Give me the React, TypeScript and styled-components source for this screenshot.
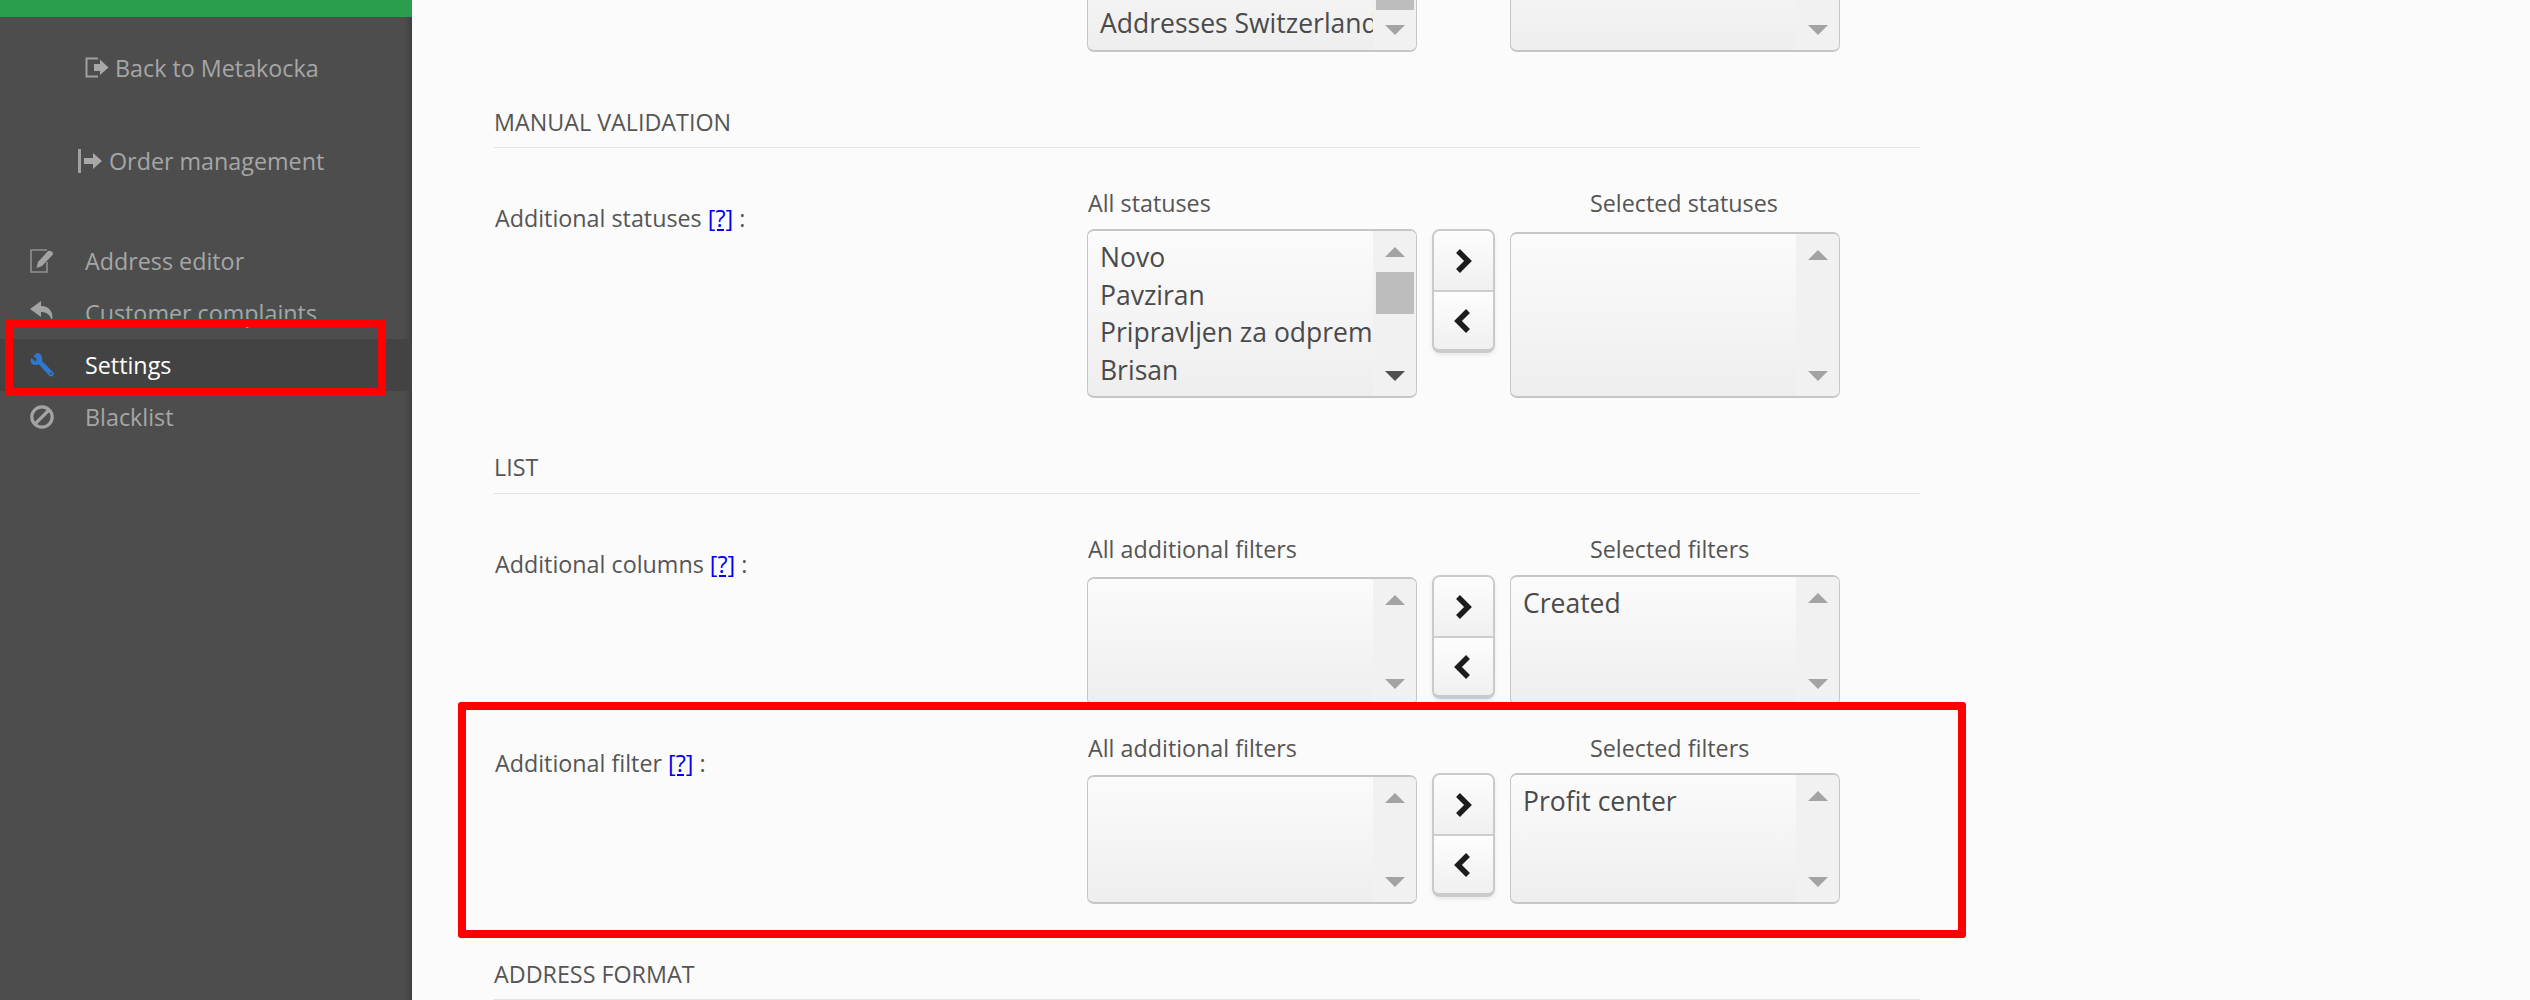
import React from "react";
import styled, { createGlobalStyle } from "styled-components";

const GlobalStyle = createGlobalStyle`
  html, body {
    margin: 0;
    background: #fbfbfb;
  }
  * {
    box-sizing: border-box;
  }
`;

const Page = styled.div`
  position: relative;
  display: flex;
  height: 1000px;
  overflow: hidden;
  font-family: "Open Sans", "Liberation Sans", sans-serif;
  font-size: 23.3px;
  line-height: 30px;
  color: #555;
`;

const Sidebar = styled.aside`
  flex: 0 0 412px;
  background: #4d4d4d;
  box-shadow: inset -7px 0 6px -5px rgba(0, 0, 0, 0.25);
  color: #a6a6a6;
`;

const GreenBar = styled.div`
  height: 17px;
  background: #2a9d4f;
`;

const TopLink = styled.div<{ $left: number; $gap: number }>`
  display: flex;
  align-items: center;
  height: 93px;
  padding-left: ${(p) => p.$left}px;
  gap: ${(p) => p.$gap}px;
`;

const TopLinks = styled.div`
  margin-top: 4px;
`;

const Nav = styled.nav`
  margin-top: 28px;
`;

const NavItem = styled.div<{ $active?: boolean }>`
  display: grid;
  grid-template-columns: 55px 1fr;
  align-items: center;
  height: 52px;
  padding-left: 30px;
  background: ${(p) => (p.$active ? "#434343" : "transparent")};
  color: ${(p) => (p.$active ? "#fff" : "inherit")};
`;

const Main = styled.main`
  flex: 1;
  padding: 0 610px 0 82px;
`;

const TopFragment = styled.div`
  display: grid;
  grid-template-columns: 593px 330px 93px 330px;
  grid-template-rows: 52px;
  align-items: end;
`;

const SectionHeading = styled.h2<{ $pad?: number }>`
  display: flex;
  align-items: flex-end;
  height: 96px;
  margin: 0;
  padding-bottom: ${(p) => p.$pad ?? 10}px;
  border-bottom: 1px solid #e3e3e3;
  font-size: 23.3px;
  font-weight: 400;
  line-height: 30px;
  color: #555;
`;

const FieldRow = styled.div<{ $top: number }>`
  display: grid;
  grid-template-columns: 593px 330px 93px 330px;
  row-gap: 10px;
  align-items: start;
  margin-top: ${(p) => p.$top}px;
`;

const FieldLabel = styled.div`
  grid-row: 1 / span 2;
  padding: 15px 0 0 1px;
`;

const HelpLink = styled.a`
  color: #00e;
  text-decoration: underline;
`;

const Caption = styled.div<{ $indent?: number }>`
  padding-left: ${(p) => p.$indent ?? 1}px;
`;

const ListBox = styled.div<{ $height: number; $offset?: number }>`
  display: flex;
  height: ${(p) => p.$height}px;
  margin-top: ${(p) => p.$offset ?? 0}px;
  overflow: hidden;
  border: 1px solid #c6c6c6;
  border-top-width: 2px;
  border-bottom-width: 2px;
  border-radius: 7px;
  background: linear-gradient(#fbfbfb, #eeeeee);
`;

const Items = styled.div<{ $top?: number }>`
  flex: 1;
  min-width: 0;
  padding: ${(p) => p.$top ?? 8}px 0 0 12px;
  overflow: hidden;
  font-size: 26.5px;
  line-height: 37.7px;
  white-space: nowrap;
  color: #4a4a4a;
`;

const ScrollTrack = styled.div`
  display: flex;
  flex: 0 0 43px;
  flex-direction: column;
  align-items: center;
  padding: 16px 2px 15px 3px;
  background: #f1f1f1;
`;

const Thumb = styled.div<{ $top: number }>`
  align-self: stretch;
  height: 42px;
  margin-top: ${(p) => p.$top}px;
  background: #bdbdbd;
`;

const Arrow = styled.div<{ $down?: boolean; $dark?: boolean }>`
  flex: none;
  width: 0;
  height: 0;
  margin-top: ${(p) => (p.$down ? "auto" : "0")};
  border-left: 10px solid transparent;
  border-right: 10px solid transparent;
  border-top: ${(p) => (p.$down ? `10px solid ${p.$dark ? "#505050" : "#a3a3a3"}` : "none")};
  border-bottom: ${(p) => (p.$down ? "none" : "10px solid #a3a3a3")};
`;

const MoveButtons = styled.div<{ $offset?: number }>`
  display: flex;
  flex-direction: column;
  width: 63px;
  margin: ${(p) => p.$offset ?? 0}px 0 0 15px;
  overflow: hidden;
  border: 2px solid #cacaca;
  border-bottom-width: 4px;
  border-radius: 8px;
  box-shadow: 0 2px 4px rgba(0, 0, 0, 0.08);
`;

const MoveButton = styled.div`
  display: flex;
  align-items: center;
  justify-content: center;
  height: 59px;
  padding-right: 2px;
  background: linear-gradient(#fdfdfd, #f0f0f0);

  & + & {
    height: 59px;
    border-top: 2px solid #cdcdcd;
  }
`;

const RedFrame = styled.div<{ $left: number; $top: number; $width: number; $height: number }>`
  position: absolute;
  left: ${(p) => p.$left}px;
  top: ${(p) => p.$top}px;
  width: ${(p) => p.$width}px;
  height: ${(p) => p.$height}px;
  border: 8px solid #ff0000;
  border-radius: 3px;
`;

const Chevron = ({ left }: { left?: boolean }) => (
  <svg width="20" height="28" viewBox="0 0 20 28">
    <path
      d={left ? "M15 4 L5 14 L15 24" : "M5 4 L15 14 L5 24"}
      fill="none"
      stroke="#1c1c1c"
      strokeWidth="5.5"
      strokeLinejoin="miter"
    />
  </svg>
);

const LogOutIcon = () => (
  <svg width="24" height="21" viewBox="0 0 24 21">
    <path d="M13 1.5 H1.5 V19.5 H13" fill="none" stroke="#a0a0a0" strokeWidth="2" />
    <path d="M9 7 H15 V2.5 L23.5 10.5 L15 18 V14 H9 Z" fill="#a8a8a8" />
  </svg>
);

const BarArrowIcon = () => (
  <svg width="24" height="24" viewBox="0 0 24 24">
    <rect x="0" y="0" width="3" height="24" fill="#a0a0a0" />
    <path d="M6 9 H15 V4 L24 12 L15 20 V15 H6 Z" fill="#a8a8a8" />
  </svg>
);

const EditIcon = () => (
  <svg width="24" height="24" viewBox="0 0 24 24">
    <path d="M17 1 H1 V23 H17 V13" fill="none" stroke="#909090" strokeWidth="1.6" />
    <path d="M8 13 L18 2 Q21 1 23 4 Q23 5 22.5 6 L12 17 L6.5 19 Z" fill="#a3a3a3" />
  </svg>
);

const ReplyIcon = () => (
  <svg width="24" height="24" viewBox="0 0 24 24">
    <path d="M11 0 L0 8 L11 16 V11 C16 11 20 13 22 20 C24 11 19 5 11 5 Z" fill="#a3a3a3" />
  </svg>
);

const WrenchIcon = () => (
  <svg width="24" height="24" viewBox="0 0 24 24">
    <path
      d="M7 0 L3.5 3 L7 6.5 L5.5 8.5 L1.5 5 C-0.5 8 1 12 5 12 C6.5 12 7.5 12 8.5 11 L19 22.5 A2.6 2.6 0 0 0 23 19 L12 8 C13 4 11 0 7 0 Z"
      fill="#2f78d2"
    />
    <circle cx="20.8" cy="20.6" r="1" fill="#434343" />
  </svg>
);

const BanIcon = () => (
  <svg width="24" height="24" viewBox="0 0 24 24">
    <circle cx="12" cy="12" r="10.2" fill="none" stroke="#a3a3a3" strokeWidth="3.2" />
    <path d="M5.5 18.5 L18.5 5.5" stroke="#a3a3a3" strokeWidth="3.2" />
  </svg>
);

const Scroll = ({ thumb, dark }: { thumb?: number; dark?: boolean }) => (
  <ScrollTrack>
    <Arrow />
    {thumb !== undefined && <Thumb $top={thumb} />}
    <Arrow $down $dark={dark} />
  </ScrollTrack>
);

const Movers = ({ offset }: { offset?: number }) => (
  <MoveButtons $offset={offset}>
    <MoveButton>
      <Chevron />
    </MoveButton>
    <MoveButton>
      <Chevron left />
    </MoveButton>
  </MoveButtons>
);

const Help = () => <HelpLink href="#">[?]</HelpLink>;

export default function App() {
  return (
    <Page>
      <GlobalStyle />
      <Sidebar>
        <GreenBar />
        <TopLinks>
          <TopLink $left={85} $gap={6}>
            <LogOutIcon />
            Back to Metakocka
          </TopLink>
          <TopLink $left={78} $gap={7}>
            <BarArrowIcon />
            Order management
          </TopLink>
        </TopLinks>
        <Nav>
          <NavItem>
            <EditIcon />
            Address editor
          </NavItem>
          <NavItem>
            <ReplyIcon />
            Customer complaints
          </NavItem>
          <NavItem $active>
            <WrenchIcon />
            Settings
          </NavItem>
          <NavItem>
            <BanIcon />
            Blacklist
          </NavItem>
        </Nav>
      </Sidebar>
      <Main>
        <TopFragment>
          <div />
          <ListBox $height={131}>
            <Items $top={82}>Addresses Switzerland</Items>
            <Scroll thumb={19} />
          </ListBox>
          <div />
          <ListBox $height={131}>
            <Items />
            <Scroll />
          </ListBox>
        </TopFragment>

        <SectionHeading>MANUAL VALIDATION</SectionHeading>
        <FieldRow $top={40}>
          <FieldLabel>
            Additional statuses <Help /> :
          </FieldLabel>
          <Caption>All statuses</Caption>
          <div />
          <Caption $indent={80}>Selected statuses</Caption>
          <ListBox $height={169} $offset={1}>
            <Items>
              <div>Novo</div>
              <div>Pavziran</div>
              <div>Pripravljen za odprem</div>
              <div>Brisan</div>
              <div>Pošiljka</div>
            </Items>
            <Scroll thumb={15} dark />
          </ListBox>
          <Movers offset={1} />
          <ListBox $height={166} $offset={4}>
            <Items />
            <Scroll />
          </ListBox>
        </FieldRow>

        <SectionHeading $pad={11}>LIST</SectionHeading>
        <FieldRow $top={40}>
          <FieldLabel>
            Additional columns <Help /> :
          </FieldLabel>
          <Caption>All additional filters</Caption>
          <div />
          <Caption $indent={80}>Selected filters</Caption>
          <ListBox $height={129} $offset={3}>
            <Items />
            <Scroll />
          </ListBox>
          <Movers offset={1} />
          <ListBox $height={131} $offset={1}>
            <Items>Created</Items>
            <Scroll />
          </ListBox>
        </FieldRow>

        <FieldRow $top={27}>
          <FieldLabel>
            Additional filter <Help /> :
          </FieldLabel>
          <Caption>All additional filters</Caption>
          <div />
          <Caption $indent={80}>Selected filters</Caption>
          <ListBox $height={129} $offset={2}>
            <Items />
            <Scroll />
          </ListBox>
          <Movers />
          <ListBox $height={131}>
            <Items>Profit center</Items>
            <Scroll />
          </ListBox>
        </FieldRow>

        <SectionHeading>ADDRESS FORMAT</SectionHeading>
      </Main>
      <RedFrame $left={5} $top={319} $width={381} $height={77} />
      <RedFrame $left={458} $top={702} $width={1508} $height={236} />
    </Page>
  );
}
